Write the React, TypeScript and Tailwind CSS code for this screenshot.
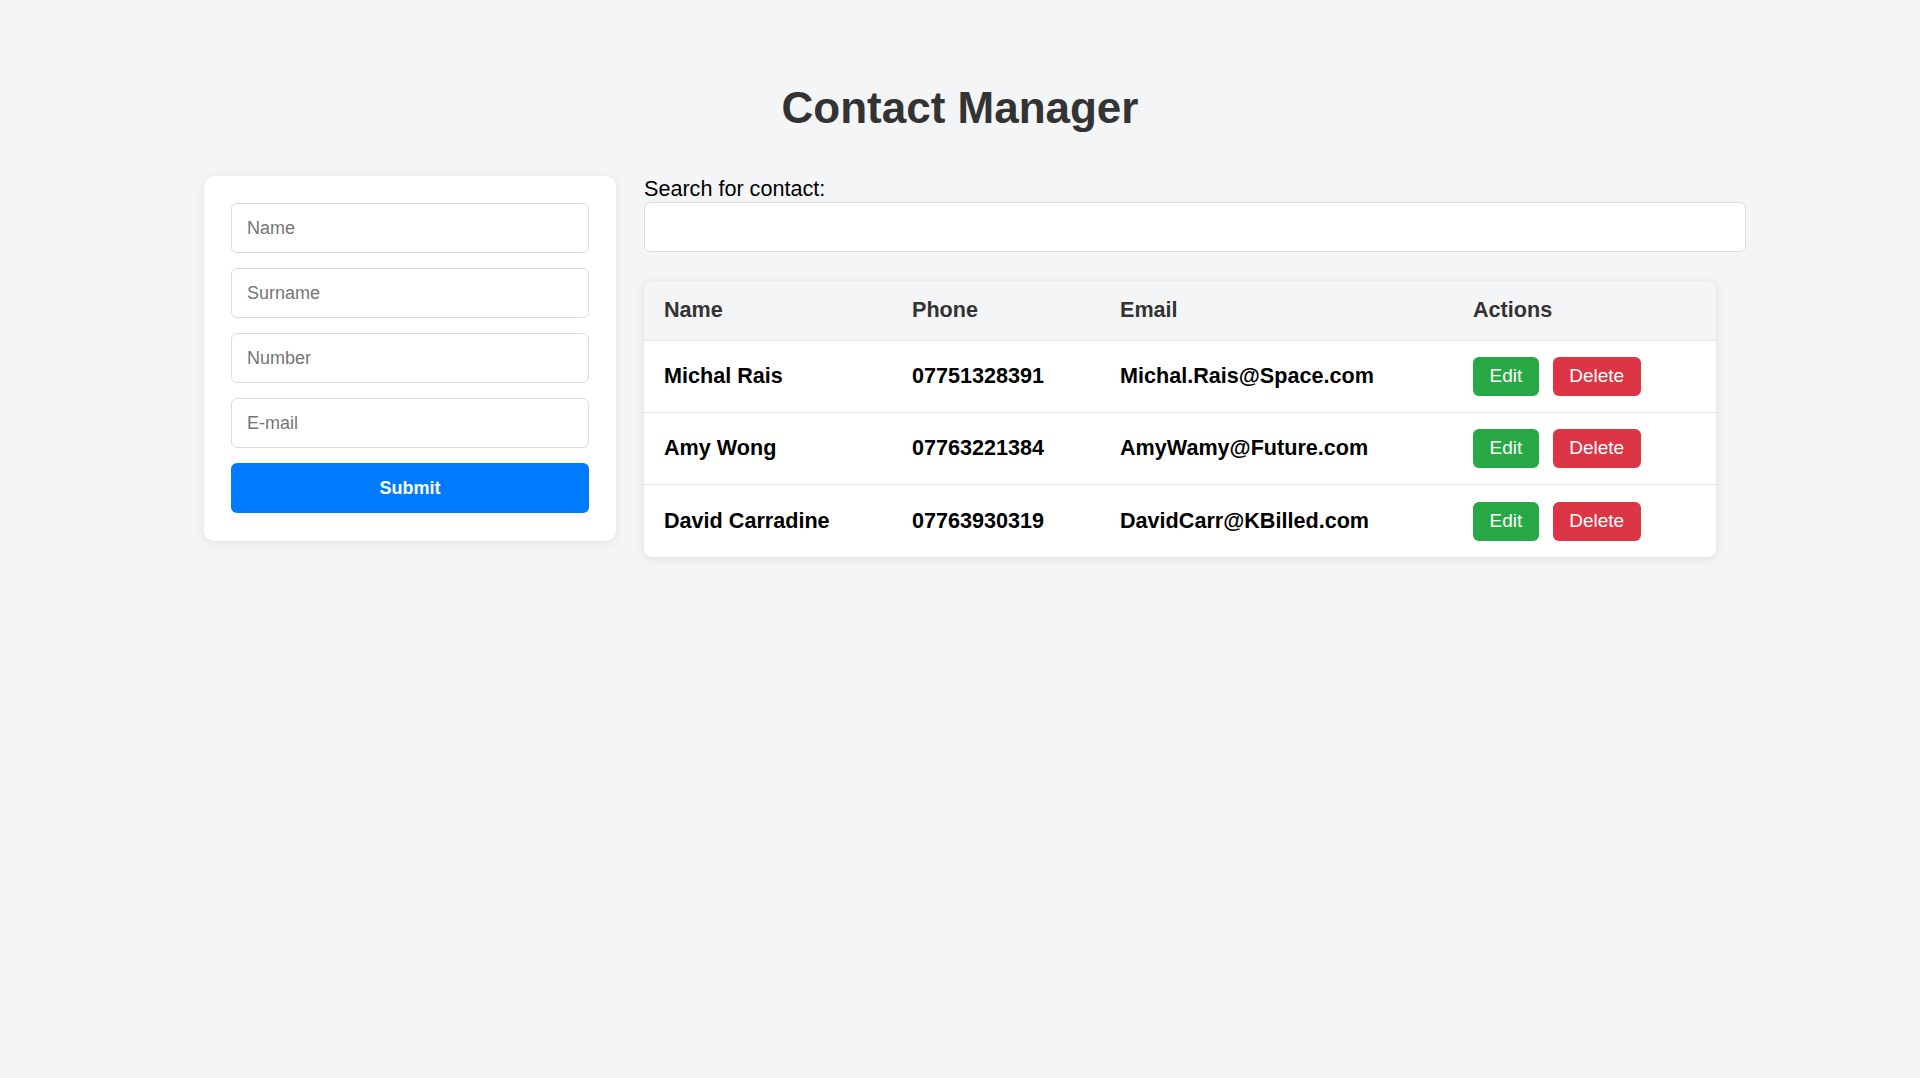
import { useState } from 'react';

type Contact = {
	name: string;
	phone: string;
	email: string;
};

const initialContacts: Contact[] = [
	{ name: 'Michal Rais', phone: '07751328391', email: 'Michal.Rais@Space.com' },
	{ name: 'Amy Wong', phone: '07763221384', email: 'AmyWamy@Future.com' },
	{ name: 'David Carradine', phone: '07763930319', email: 'DavidCarr@KBilled.com' },
];

const fields = ['Name', 'Surname', 'Number', 'E-mail'];

const App = () => {
	const [search, setSearch] = useState<string>('');

	const filtered = initialContacts.filter((c) =>
		c.name.toLowerCase().includes(search.toLowerCase())
	);

	return (
		<div className="min-h-screen bg-[#f4f5f7] font-['Liberation_Sans',Arial,sans-serif]">
			<h1 className="pt-[82px] text-center text-[44px] font-bold leading-[51px] text-[#333]">
				Contact Manager
			</h1>

			<div className="mt-[43px] flex items-start gap-[28px] pl-[204px]">
				{/* Form */}
				<form
					onSubmit={(e) => e.preventDefault()}
					className="flex w-[412px] flex-col gap-[15px] rounded-[10px] bg-white px-[27px] pb-[28px] pt-[27px] shadow-[0_2px_10px_rgba(0,0,0,0.08)]"
				>
					{fields.map((f) => (
						<input
							key={f}
							type="text"
							placeholder={f}
							className="h-[50px] w-full rounded-[6px] border border-[#dcdcdc] bg-white px-[15px] text-[18px] text-black outline-none placeholder:text-[#757575]"
						/>
					))}
					<button
						type="submit"
						className="h-[50px] w-full rounded-[6px] bg-[#007bff] text-[18px] font-bold text-white"
					>
						Submit
					</button>
				</form>

				{/* Search + table */}
				<div className="w-[1102px]">
					<label className="block text-[21.6px] leading-[25px] text-black">
						Search for contact:
					</label>
					<input
						type="text"
						value={search}
						onChange={(e) => setSearch(e.target.value)}
						className="mt-[1px] h-[50px] w-full rounded-[6px] border border-[#dcdcdc] bg-white px-[15px] text-[18px] outline-none"
					/>

					<div className="mt-[29px] w-[1072px] overflow-hidden rounded-[8px] bg-white shadow-[0_2px_8px_rgba(0,0,0,0.1)]">
						<div className="grid h-[60px] grid-cols-[248px_208px_353px_263px] items-center border-b border-[#e8e8e8] bg-[#f4f5f7] text-[21.6px] font-bold text-[#333]">
							<div className="pl-[20px]">Name</div>
							<div className="pl-[20px]">Phone</div>
							<div className="pl-[20px]">Email</div>
							<div className="pl-[20px]">Actions</div>
						</div>
						{filtered.map((c, i) => (
							<div
								key={c.email}
								className={
									i < filtered.length - 1
										? 'grid h-[72px] grid-cols-[248px_208px_353px_263px] items-center border-b border-[#e8e8e8] text-[21.6px] font-bold text-black'
										: 'grid h-[72px] grid-cols-[248px_208px_353px_263px] items-center text-[21.6px] font-bold text-black'
								}
							>
								<div className="pl-[20px]">{c.name}</div>
								<div className="pl-[20px]">{c.phone}</div>
								<div className="pl-[20px]">{c.email}</div>
								<div className="flex gap-[14px] pl-[20px] font-normal">
									<button className="h-[39px] rounded-[6px] bg-[#28a745] px-[16.5px] text-[19px] text-white">
										Edit
									</button>
									<button className="h-[39px] rounded-[6px] bg-[#dc3545] px-[16.5px] text-[19px] text-white">
										Delete
									</button>
								</div>
							</div>
						))}
					</div>
				</div>
			</div>
		</div>
	);
};

export default App;
